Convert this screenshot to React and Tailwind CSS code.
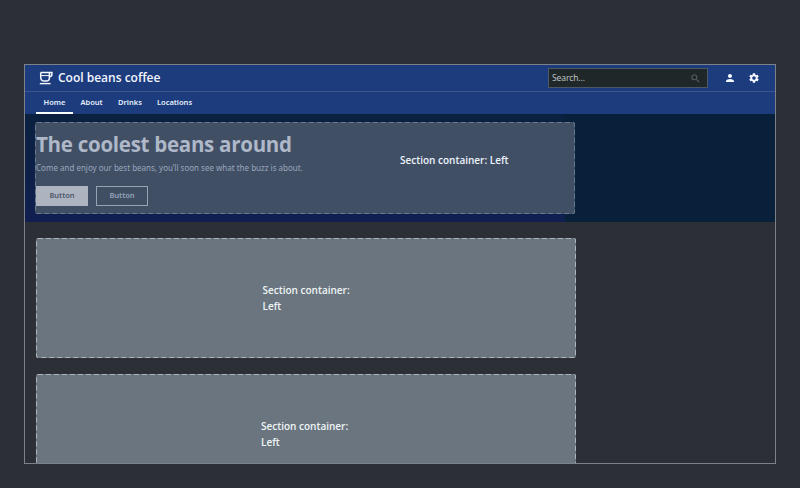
import React from "react";
import { MdPerson, MdSearch, MdSettings } from "react-icons/md";

function CupIcon() {
  return (
    <svg viewBox="0 0 14 14" className="ml-[14px] h-3.5 w-3.5" fill="none" stroke="#f5faff" aria-hidden="true">
      <path d="M1.7 1.4H12.9V3.6Q12.9 5.6 10.4 5.8M10.4 1.4V6.4Q10.4 10 7.2 10H5.2Q1.7 10 1.7 5.9V1.4" strokeWidth="1.5" />
      <path d="M2 4.6H10" strokeWidth="1" />
      <path d="M0.8 12.6H11.6" strokeWidth="1.4" />
    </svg>
  );
}

function DashedOutline({ color }) {
  return (
    <svg className="pointer-events-none absolute inset-0 h-full w-full overflow-visible" aria-hidden="true">
      <rect x="0.5" y="0.5" width="539" className="h-[calc(100%-1px)]" rx="1.5" fill="none" stroke={color} strokeDasharray="5 3" />
    </svg>
  );
}

function Tab({ label, active, className }) {
  return (
    <a className={`relative flex h-[22px] items-center justify-center pb-px font-['Noto_Sans',sans-serif] text-[7.5px] font-semibold leading-none text-[#e4effb] ${className}`}>
      <span className="whitespace-nowrap">{label}</span>
      {active && <span className="absolute inset-x-0 bottom-0 h-0.5 bg-[#f5ffff]" />}
    </a>
  );
}

function Header() {
  return (
    <header className="h-[49px] bg-[#1d3c7e]">
      <div className="flex h-[27px] items-center border-b border-[#3b568e]">
        <CupIcon />
        <h1 className="ml-[5px] whitespace-nowrap text-[12px] font-semibold leading-none text-[#f2f7ff]">Cool beans coffee</h1>
        <div className="ml-auto flex h-5 w-40 items-center justify-between border border-[#4b5966] bg-[#202728] pl-[3px] pr-1.5">
          <span className="font-['Noto_Sans',sans-serif] text-[8.5px] leading-none tracking-[-0.1px] text-[#bcc1c2]">Search...</span>
          <MdSearch className="h-[11px] w-[11px] text-[#62696a]" />
        </div>
        <MdPerson className="ml-4 h-3 w-3 text-[#f5faff]" />
        <MdSettings className="ml-3 mr-[15px] h-3 w-3 text-[#f5faff]" />
      </div>
      <nav className="ml-[11px] flex">
        <Tab label="Home" active className="w-[37px]" />
        <Tab label="About" className="w-[37px]" />
        <Tab label="Drinks" className="w-10" />
        <Tab label="Locations" className="w-[49px]" />
      </nav>
    </header>
  );
}

function Hero() {
  return (
    <section className="flex h-[108px] bg-[#09203a]">
      <div className="w-[540px] shrink-0 bg-gradient-to-b from-[#0b213f] to-[#101f50] pl-2.5 pt-2">
        <div className="relative h-[92px] w-[540px] rounded-[2px] bg-[#414f65]">
          <DashedOutline color="#6c7a8e" />
          <div className="pl-px">
            <h2 className="whitespace-nowrap pt-[9px] text-[20.5px] font-bold leading-[26px] tracking-[-0.27px] text-[#aeb8c8]">The coolest beans around</h2>
            <p className="mt-[5px] whitespace-nowrap font-['Noto_Sans',sans-serif] text-[8px] leading-[12px] text-[#98a6bb]">Come and enjoy our best beans, you’ll soon see what the buzz is about.</p>
            <div className="mt-3 flex gap-2 font-['Noto_Sans',sans-serif]">
              <button className="h-5 w-[52px] bg-[#adb4c0] text-[7.5px] font-semibold leading-none text-[#4b5668]">Button</button>
              <button className="h-5 w-[52px] border border-[#96a2b5] text-[7.5px] font-semibold leading-none text-[#96a4b9]">Button</button>
            </div>
          </div>
          <span className="absolute left-[365px] top-[30px] whitespace-nowrap text-[10px] font-semibold leading-4 text-[#edf4fc]">Section container: Left</span>
        </div>
      </div>
    </section>
  );
}

function SectionContainer({ className }) {
  return (
    <section className={`relative h-[120px] w-[540px] shrink-0 rounded-[2px] bg-[#6b757f] pt-11 ${className}`}>
      <DashedOutline color="#aeb6bc" />
      <p className="w-[100px] text-[10px] font-semibold leading-4 text-[#edf4f5]">
        Section container:
        <br />
        Left
      </p>
    </section>
  );
}

export default function App() {
  return (
    <div className="h-[488px] w-[800px] overflow-hidden bg-[#2c2f35] px-6 pt-16 font-['Open_Sans','Noto_Sans',sans-serif]">
      <main className="h-[400px] w-[752px] overflow-hidden border border-[#7c8288] bg-[#2c2f35]">
        <Header />
        <Hero />
        <div className="flex flex-col gap-4 pl-[11px] pt-4">
          <SectionContainer className="pl-[226.5px]" />
          <SectionContainer className="pl-[225px]" />
        </div>
      </main>
    </div>
  );
}
